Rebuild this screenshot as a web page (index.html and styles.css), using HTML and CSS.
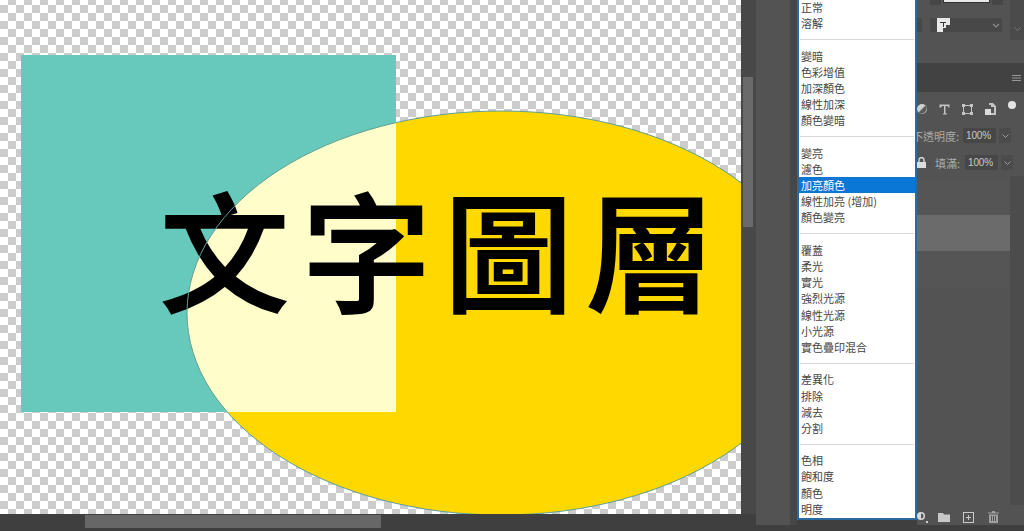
FILE: index.html
```html
<!DOCTYPE html>
<html lang="zh-Hant">
<head>
    <meta charset="UTF-8">
    <meta name="viewport" content="width=device-width, initial-scale=1.0">
    <title>圖層混合模式</title>
    <link rel="stylesheet" href="styles.css">
</head>
<body>
    <div class="app">
        <div class="doc">
            <div class="doc-top">
                <div class="canvas">
                    <svg class="art" width="741" height="514" viewBox="0 0 741 514">
                        <defs>
                            <clipPath id="square-clip">
                                <rect x="21" y="55" width="375" height="357"></rect>
                            </clipPath>
                        </defs>
                        <rect x="21" y="55" width="375" height="357" fill="#66c9bc"></rect>
                        <ellipse cx="501" cy="313" rx="314" ry="202" fill="#ffd800"></ellipse>
                        <ellipse cx="501" cy="313" rx="314" ry="202" fill="#fffdc9" clip-path="url(#square-clip)"></ellipse>
                        <text class="art-text" x="160" y="303">文字圖層</text>
                        <ellipse cx="501" cy="313" rx="314" ry="202" fill="none" stroke="#5f9f98" stroke-width="1"></ellipse>
                    </svg>
                </div>
                <div class="vscroll"><div class="vthumb"></div></div>
            </div>
            <div class="hscroll"><div class="hthumb"></div></div>
        </div>

        <div class="gutter"></div>

        <div class="menu">
            <div class="item">正常</div>
            <div class="item">溶解</div>
            <div class="sep"></div>
            <div class="item">變暗</div>
            <div class="item">色彩增值</div>
            <div class="item">加深顏色</div>
            <div class="item">線性加深</div>
            <div class="item">顏色變暗</div>
            <div class="sep"></div>
            <div class="item">變亮</div>
            <div class="item">濾色</div>
            <div class="item selected">加亮顏色</div>
            <div class="item">線性加亮 (增加)</div>
            <div class="item">顏色變亮</div>
            <div class="sep"></div>
            <div class="item">覆蓋</div>
            <div class="item">柔光</div>
            <div class="item">實光</div>
            <div class="item">強烈光源</div>
            <div class="item">線性光源</div>
            <div class="item">小光源</div>
            <div class="item">實色疊印混合</div>
            <div class="sep"></div>
            <div class="item">差異化</div>
            <div class="item">排除</div>
            <div class="item">減去</div>
            <div class="item">分割</div>
            <div class="sep"></div>
            <div class="item">色相</div>
            <div class="item">飽和度</div>
            <div class="item">顏色</div>
            <div class="item">明度</div>
        </div>

        <div class="panel">
            <div class="options">
                <div class="options-main">
                    <div class="swatch-row">
                        <div class="mini-box"></div>
                        <div class="swatch"></div>
                        <div class="mini-box"></div>
                    </div>
                    <div class="preset-row">
                        <div class="preset-stub"></div>
                        <div class="preset">
                            <svg width="13" height="14" viewBox="0 0 13 14">
                                <path d="M0 0h13v7H9v3H6v4H0z" fill="#e8e8e8"></path>
                                <path d="M3 4h6v1H7v4H6V5H3z" fill="#333"></path>
                            </svg>
                            <svg width="8" height="5" viewBox="0 0 8 5">
                                <path d="M1 1l3 3 3-3" fill="none" stroke="#8c8c8c" stroke-width="1.2"></path>
                            </svg>
                        </div>
                    </div>
                </div>
                <div class="options-side">
                    <svg width="7" height="4" viewBox="0 0 7 4"><path d="M0.5 0.5l3 3 3-3" fill="none" stroke="#777"></path></svg>
                </div>
            </div>
            <div class="tabbar">
                <svg width="9" height="6" viewBox="0 0 9 6">
                    <path d="M0 0h9v1H0zM0 2.5h9v1H0zM0 5h9v1H0z" fill="#969696"></path>
                </svg>
            </div>
            <div class="filters">
                <svg width="10" height="10" viewBox="0 0 10 10">
                    <circle cx="5" cy="5" r="5" fill="#d0d0d0"></circle>
                    <path d="M8.5 1.5L1.5 8.5A5 5 0 0 0 8.5 1.5z" fill="#5a5a5a"></path>
                </svg>
                <svg width="11" height="11" viewBox="0 0 11 11">
                    <path d="M0.5 0.5h10v3h-1l-1-1.5h-2v7.500h1.500v1h-4v-1H5V2H3L2 3.500H0.500z" fill="#c4c4c4"></path>
                </svg>
                <svg width="11" height="11" viewBox="0 0 11 11">
                    <rect x="1.500" y="1.500" width="8" height="8" fill="none" stroke="#c4c4c4" stroke-width="1"></rect>
                    <path d="M0 0h3v3H0zM8 0h3v3H8zM0 8h3v3H0zM8 8h3v3H8z" fill="#c4c4c4"></path>
                </svg>
                <svg width="11" height="12" viewBox="0 0 11 12">
                    <path d="M4 0h4l3 3v9H6V10h3V4H6V2H4z" fill="#c4c4c4"></path>
                    <rect x="0" y="6" width="6" height="6" fill="#dcdcdc"></rect>
                </svg>
                <div class="toggle"></div>
            </div>
            <div class="field-row opacity-row">
                <span class="label">不透明度:</span>
                <span class="value">100%</span>
                <span class="stepper">
                    <svg width="7" height="4" viewBox="0 0 7 4"><path d="M0.500 0.500l3 3 3-3" fill="none" stroke="#9a9a9a"></path></svg>
                </span>
            </div>
            <div class="field-row fill-row">
                <svg class="lock" width="9" height="11" viewBox="0 0 9 11">
                    <path d="M2 5V3a2.500 2.500 0 0 1 5 0v2" fill="none" stroke="#dcdcdc" stroke-width="1.300"></path>
                    <rect x="0" y="5" width="9" height="6" fill="#dcdcdc"></rect>
                </svg>
                <span class="label">填滿:</span>
                <span class="value">100%</span>
                <span class="stepper">
                    <svg width="7" height="4" viewBox="0 0 7 4"><path d="M0.500 0.500l3 3 3-3" fill="none" stroke="#9a9a9a"></path></svg>
                </span>
            </div>
            <div class="layers">
                <div class="layer"></div>
                <div class="layer active"></div>
                <div class="layer"></div>
            </div>
            <div class="panel-foot">
                <svg class="foot-adjust" width="11" height="11" viewBox="0 0 11 11">
                    <circle cx="4" cy="4" r="4" fill="#d8d8d8"></circle>
                    <path d="M4 1.500a2.500 2.500 0 0 1 0 5z" fill="#555"></path>
                    <rect x="9" y="9" width="2" height="2" fill="#ccc"></rect>
                </svg>
                <svg class="foot-folder" width="12" height="9" viewBox="0 0 12 9">
                    <path d="M0 0h5l1 1.500h6V9H0z" fill="#c8c8c8"></path>
                </svg>
                <svg class="foot-new" width="11" height="11" viewBox="0 0 11 11">
                    <rect x="0.500" y="0.500" width="10" height="10" fill="none" stroke="#c8c8c8"></rect>
                    <path d="M5 3h1v2h2v1H6v2H5V6H3V5h2z" fill="#c8c8c8"></path>
                </svg>
                <svg class="foot-trash" width="11" height="12" viewBox="0 0 11 12">
                    <path d="M0 1.500h11v1H0zM4 0h3v1.500H4zM1 3.500h9V12H1zM3 5v5h1V5zM5 5v5h1V5zM7 5v5h1V5z" fill="#a0a0a0" fill-rule="evenodd"></path>
                </svg>
            </div>
        </div>
    </div>
</body>
</html>
```

FILE: styles.css
```css
body {
    margin: 0;
    background-color: #3f3f3f;
    font-family: "Noto Sans CJK TC", "Liberation Sans", sans-serif;
    overflow: hidden;
}

.app {
    display: flex;
    align-items: flex-start;
    width: 1024px;
    height: 531px;
    overflow: hidden;
}

.doc {
    width: 756px;
    flex: none;
}

.doc-top {
    display: flex;
    height: 514px;
}

.canvas {
    width: 741px;
    height: 514px;
    flex: none;
    background-color: #fff;
    background-image: conic-gradient(#ccc 25%, #fff 25% 50%, #ccc 50% 75%, #fff 75%);
    background-size: 16px 16px;
    background-position: 0 -3px;
}

.art {
    display: block;
}

.art-text {
    font-family: "Noto Sans CJK TC", sans-serif;
    font-size: 129px;
    font-weight: 500;
    letter-spacing: 13px;
    fill: #000;
    stroke: #000;
    stroke-width: 1.8px;
}

.vscroll {
    width: 15px;
    flex: none;
    padding: 77px 0 0 2px;
    box-sizing: border-box;
    background: #484848;
}

.vthumb {
    width: 10px;
    height: 150px;
    background: #6a6a6a;
}

.hscroll {
    height: 17px;
    box-sizing: border-box;
    padding: 1px 0 3px 85px;
    background: #3f3f3f;
}

.hthumb {
    width: 296px;
    height: 13px;
    background: #676767;
}

.gutter {
    width: 41px;
    height: 525px;
    flex: none;
    box-sizing: border-box;
    background: #535353;
    border-right: 7px solid #474747;
}

.menu {
    width: 120px;
    height: 521px;
    margin-top: -1px;
    flex: none;
    box-sizing: border-box;
    background: #fff;
    border: 2px solid #2a6aa0;
    border-top: none;
    z-index: 2;
}

.item {
    height: 16.2px;
    line-height: 16.2px;
    padding-left: 2px;
    font-size: 11px;
    color: #444;
    white-space: nowrap;
}

.item.selected {
    background: #0a76d6;
    color: #fff;
}

.sep {
    height: 16.2px;
    margin: 0 1px;
    background: linear-gradient(#d9d9d9, #d9d9d9) center / 100% 1px no-repeat;
}

.panel {
    width: 107px;
    height: 525px;
    flex: none;
    display: flex;
    flex-direction: column;
    background: #535353;
    font-size: 11px;
}

.options {
    height: 63px;
    flex: none;
    display: flex;
    align-items: flex-start;
}

.options-main {
    flex: 1;
}

.options-side {
    width: 14px;
    height: 40px;
    display: flex;
    align-items: flex-end;
    justify-content: center;
    background: #4b4b4b;
}

.options-side svg {
    margin-bottom: 9px;
}

.swatch-row {
    display: flex;
    gap: 2px;
    height: 6px;
    padding-left: 13px;
}

.mini-box {
    width: 11px;
    height: 5px;
    background: #464646;
}

.swatch {
    width: 45px;
    height: 2px;
    background: #e8e8e8;
    border: 1px solid #333;
    border-top: none;
}

.preset-row {
    display: flex;
    gap: 8px;
    margin-top: 12px;
}

.preset-stub {
    width: 5px;
    height: 14px;
    background: #484848;
}

.preset {
    display: flex;
    align-items: center;
    justify-content: space-between;
    box-sizing: border-box;
    width: 72px;
    height: 14px;
    padding: 0 2px 0 7px;
    background: #484848;
}

.tabbar {
    height: 29px;
    flex: none;
    display: flex;
    align-items: center;
    justify-content: flex-end;
    padding-right: 3px;
    background: #424242;
}

.filters {
    height: 30px;
    flex: none;
    box-sizing: border-box;
    display: flex;
    align-items: center;
    justify-content: space-between;
    padding: 4px 8px 0 0;
}

.toggle {
    width: 8px;
    height: 8px;
    border-radius: 50%;
    background: #e4e4e4;
    margin-top: -8px;
}

.field-row {
    display: flex;
    align-items: center;
    height: 27px;
    flex: none;
}

.label {
    color: #ababab;
    white-space: nowrap;
}

.opacity-row .label {
    margin-left: -5px;
    margin-right: 4px;
}

.fill-row .label {
    margin-left: 9px;
    margin-right: 5px;
}

.lock {
    flex: none;
}

.value {
    width: 33px;
    height: 15px;
    line-height: 15px;
    padding-left: 3px;
    box-sizing: border-box;
    background: #474747;
    font-family: "Liberation Sans", sans-serif;
    font-size: 10px;
    letter-spacing: -0.2px;
    color: #c8c8c8;
}

.stepper {
    display: flex;
    align-items: center;
    justify-content: center;
    width: 12px;
    height: 15px;
    margin-left: 3px;
    background: #4b4b4b;
}

.layers {
    flex: 1;
    padding-top: 3px;
    background: linear-gradient(#4c4c4c, #4c4c4c) right / 14px 100% no-repeat;
}

.layer {
    height: 36px;
    margin-right: 14px;
    background: #555;
}

.layer.active {
    background: #6b6b6b;
}

.panel-foot {
    height: 18px;
    margin-bottom: 2px;
    flex: none;
    display: flex;
    align-items: flex-end;
}

.foot-folder {
    margin-left: 10px;
    margin-bottom: 1px;
}

.foot-new {
    margin-left: 13px;
}

.foot-trash {
    margin-left: 14px;
}
```
